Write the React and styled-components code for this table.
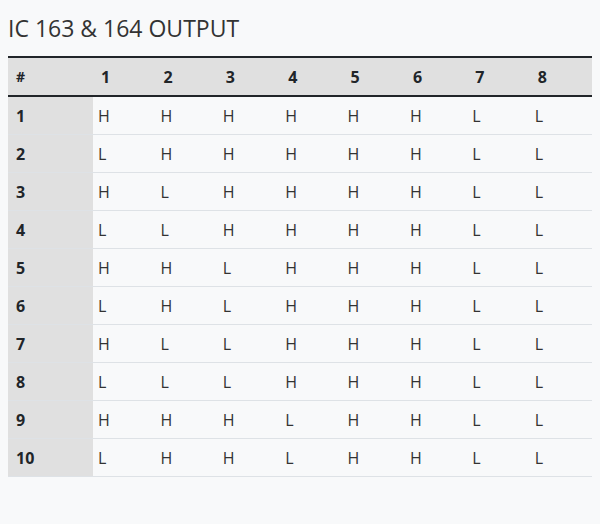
import React from "react";
import styled, { createGlobalStyle } from "styled-components";

const rows = [
  "HHHHHHLL",
  "LHHHHHLL",
  "HLHHHHLL",
  "LLHHHHLL",
  "HHLHHHLL",
  "LHLHHHLL",
  "HLLHHHLL",
  "LLLHHHLL",
  "HHHLHHLL",
  "LHHLHHLL",
];

const GlobalStyle = createGlobalStyle`
  body {
    margin: 0;
    background: #f8f9fa;
    font-family: "Open Sans", "Noto Sans", sans-serif;
    color: #212529;
  }
`;

const Page = styled.div`
  padding: 8px;
`;

const Title = styled.h2`
  margin: 3px 0 10px;
  font-size: 23px;
  font-weight: 400;
  color: #333;
  line-height: 1.5;
`;

const Table = styled.table`
  width: 584px;
  border-collapse: collapse;
  table-layout: fixed;
  font-size: 16px;
`;

const HeadRow = styled.tr`
  background: #e0e0e0;
  border-top: 2px solid #212529;
  border-bottom: 2px solid #212529;
`;

const HeadCell = styled.th`
  height: 36px;
  padding: 1px 8px 0;
  text-align: left;
  font-weight: 700;
  font-size: ${(p) => (p.$first ? "14px" : "16px")};
  width: ${(p) => (p.$first ? "69px" : "auto")};
`;

const Row = styled.tr`
  border-bottom: 1px solid #dee2e6;
`;

const RowHead = styled.th`
  height: 36px;
  padding: 1px 8px 0;
  text-align: left;
  font-weight: 700;
  background: #e0e0e0;
`;

const Cell = styled.td`
  height: 36px;
  padding: 1px 5px 0;
  color: #333;
`;

export default function App() {
  return (
    <>
      <GlobalStyle />
      <Page>
        <Title>IC 163 &amp; 164 OUTPUT</Title>
        <Table>
          <thead>
            <HeadRow>
              <HeadCell $first>#</HeadCell>
              {[1, 2, 3, 4, 5, 6, 7, 8].map((n) => (
                <HeadCell key={n}>{n}</HeadCell>
              ))}
            </HeadRow>
          </thead>
          <tbody>
            {rows.map((r, i) => (
              <Row key={i}>
                <RowHead>{i + 1}</RowHead>
                {r.split("").map((v, j) => (
                  <Cell key={j}>{v}</Cell>
                ))}
              </Row>
            ))}
          </tbody>
        </Table>
      </Page>
    </>
  );
}
